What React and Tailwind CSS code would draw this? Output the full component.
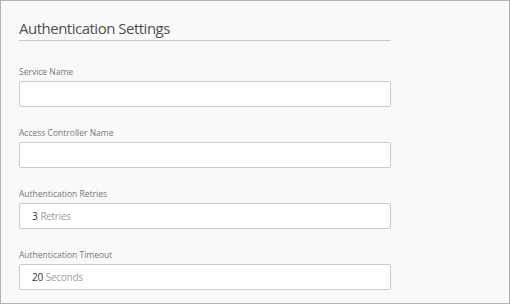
import React from 'react';

const Field = ({ label, value, unit }) => (
  <div className="flex flex-col">
    <label className="mb-[3px] text-[8.5px] leading-[12px] text-[#777]">{label}</label>
    <div className="flex h-[26px] w-[372px] items-center rounded-[2px] border border-[#c9c9c9] bg-white pl-[12px] text-[10px] tracking-[-0.3px]">
      {value && <span className="text-[#333]">{value}</span>}
      {unit && <span className="ml-[3px] text-[#a0a0a0]">{unit}</span>}
    </div>
  </div>
);

const App = () => {
  return (
    <div
      className="h-[304px] w-[510px] border border-[#b3b3b3] bg-[#f9f9f9] pl-[18px] pt-[17px]"
      style={{ fontFamily: '"Open Sans", "Noto Sans", sans-serif' }}
    >
      {/* Header */}
      <div className="w-[372px] border-b border-[#c8c8c8] pb-[2px]">
        <h1 className="text-[15px] leading-[20px] tracking-[-0.5px] text-[#505050]">
          Authentication Settings
        </h1>
      </div>

      {/* Form */}
      <div className="mt-[25px] flex flex-col gap-[20px]">
        <Field label="Service Name" />
        <Field label="Access Controller Name" />
        <Field label="Authentication Retries" value="3" unit="Retries" />
        <Field label="Authentication Timeout" value="20" unit="Seconds" />
      </div>
    </div>
  );
};

export default App;
